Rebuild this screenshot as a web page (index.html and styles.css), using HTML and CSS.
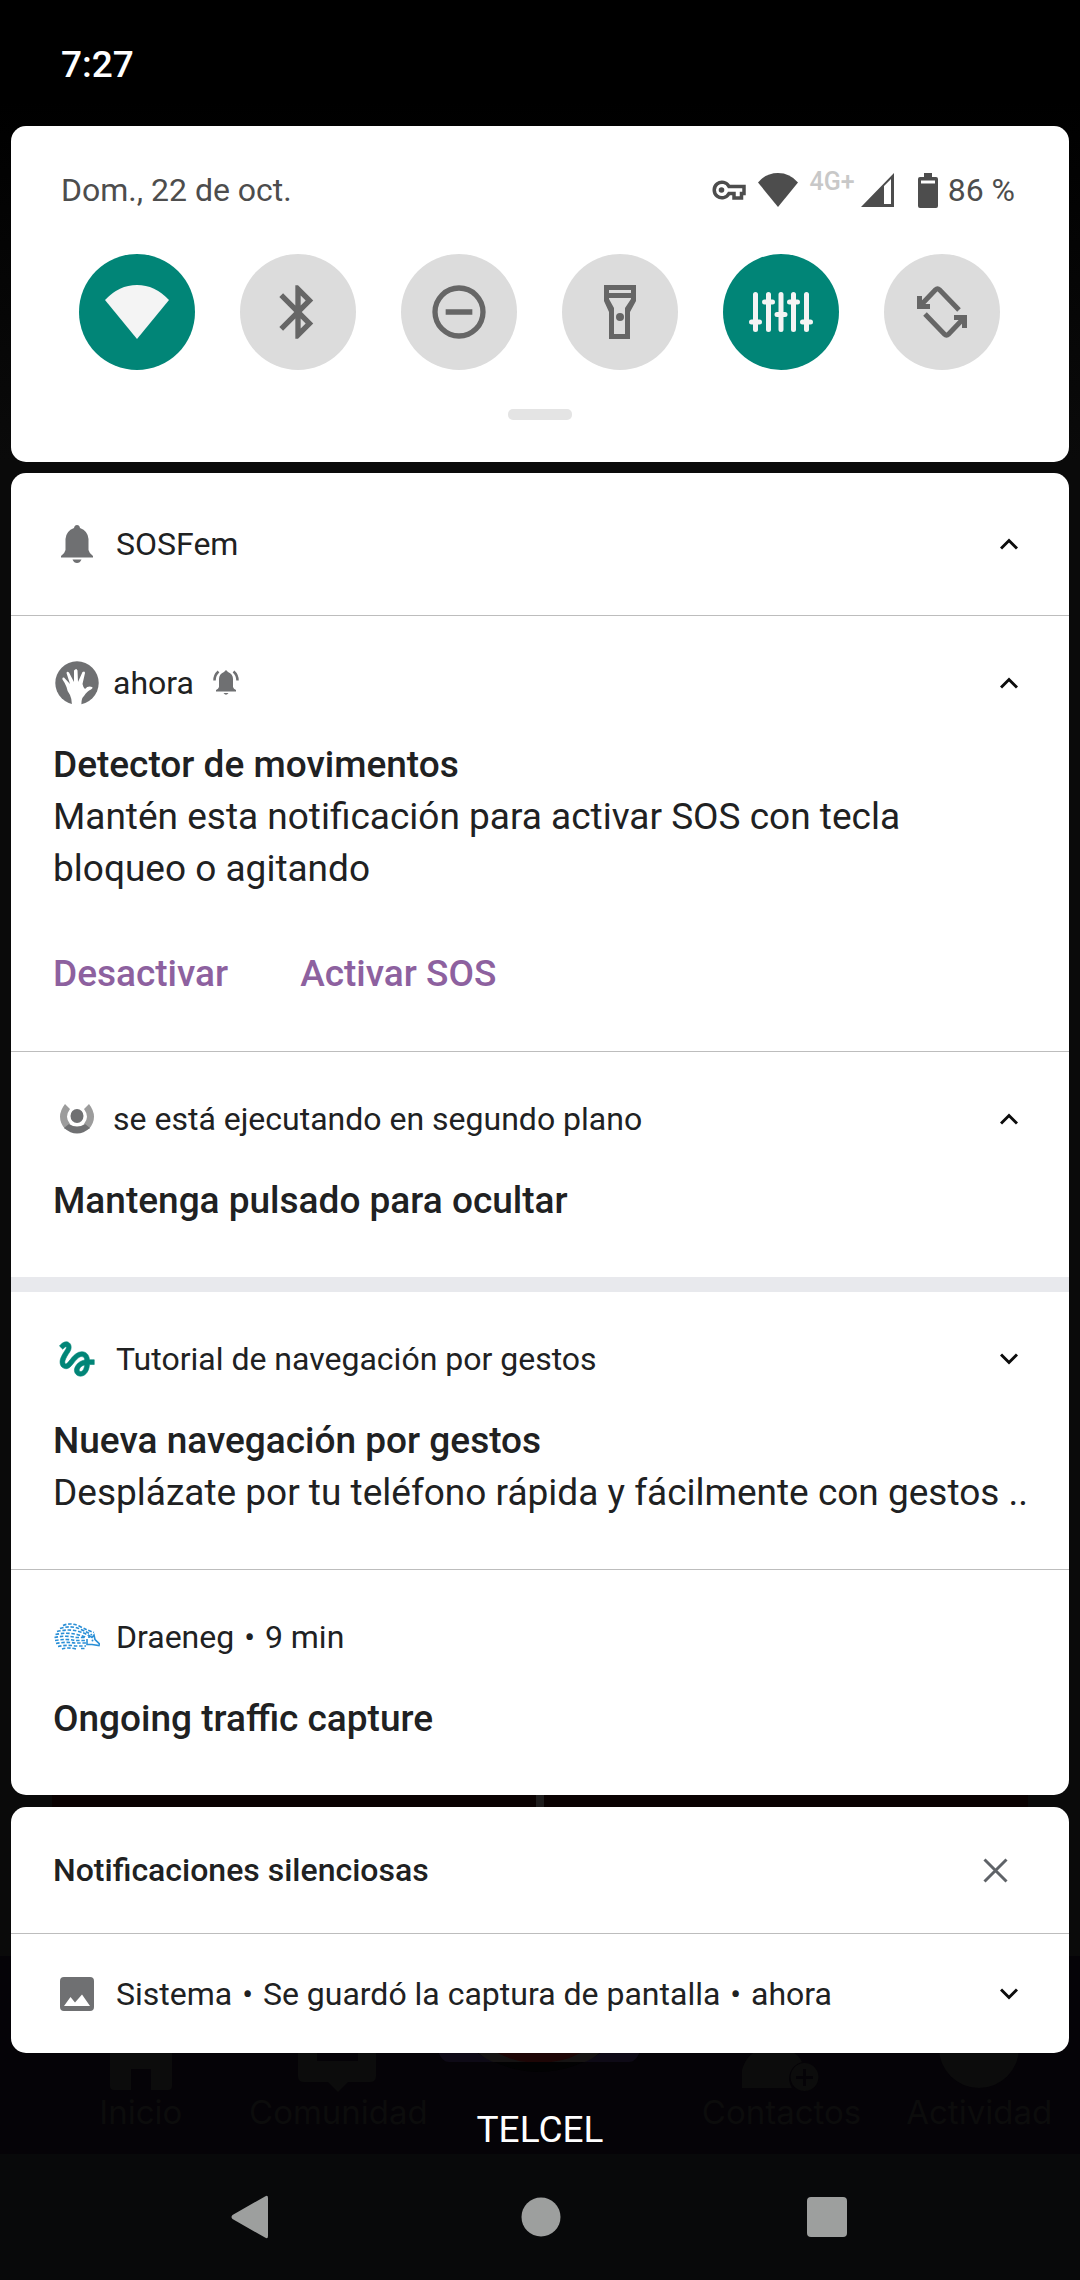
FILE: index.html
```html
<!DOCTYPE html>
<html lang="es">
<head>
<meta charset="utf-8">
<meta name="viewport" content="width=device-width, initial-scale=1">
<title>Notificaciones</title>
<link rel="stylesheet" href="styles.css">
</head>
<body>
<svg class="defs" aria-hidden="true">
  <symbol id="up" viewBox="0 0 18 12"><path d="M1 10.500 9 2.500 17 10.500" fill="none" stroke="currentColor" stroke-width="3"/></symbol>
  <symbol id="down" viewBox="0 0 18 12"><path d="M1 1.500 9 9.500 17 1.500" fill="none" stroke="currentColor" stroke-width="3"/></symbol>
</svg>
<div class="screen">
  <div class="app" aria-hidden="true">
    <div class="app-main"><div class="hero"><span class="hero-mark"></span></div></div>
    <div class="tabbar">
      <div class="tab">
        <svg width="80" height="80" viewBox="0 0 80 80"><path d="M40 10 9 36V74q0 4 4 4H30V57H50V78H67q4 0 4-4V36Z"/></svg>
        <span>Inicio</span>
      </div>
      <div class="tab">
        <svg width="80" height="80" viewBox="0 0 80 80"><path fill-rule="evenodd" d="M8 0H72q6 0 6 6V64q0 6-6 6H50L40 80 30 70H6q-6 0-6-6V0ZM19 38V49H60V38Z"/></svg>
        <span>Comunidad</span>
      </div>
      <div class="sos">
        <svg width="204" height="124" viewBox="0 0 204 124"><path fill="#0e0a16" d="M0 60H204V92Q200 106 192 106H12Q4 106 0 92Z"/><path fill="#020203" d="M30 90Q102 142 174 90Z"/><path fill="#161313" d="M36 92Q46 102 56 106H148Q158 102 168 92Z"/><path fill="#1e0606" d="M52 92Q70 104 90 106H114Q134 104 152 92Z"/></svg>
      </div>
      <div class="tab">
        <svg width="80" height="80" viewBox="0 0 80 80"><path d="M0 76V58Q6 36 30 36T60 50A17 17 0 0 0 50 76Z"/><path fill-rule="evenodd" d="M62 51a14 14 0 1 0 1 0ZM61 57h3v7h7v3h-7v7h-3v-7h-7v-3h7Z"/></svg>
        <span>Contactos</span>
      </div>
      <div class="tab">
        <svg width="80" height="80" viewBox="0 0 80 80"><circle cx="40" cy="36" r="40"/></svg>
        <span>Actividad</span>
      </div>
    </div>
  </div>

  <main class="shade">
    <header class="status"><time>7:27</time></header>

    <section class="card quick">
      <div class="quick-top">
        <span>Dom., 22 de oct.</span>
        <div class="signals">
          <svg width="34" height="20" viewBox="0 0 34 20"><path fill="none" stroke="currentColor" stroke-width="3.500" d="M17 6.500A7.800 7.800 0 1 0 17 13.500H22V18H29.500V13.500H32V6.500Z"/><circle cx="9.500" cy="10" r="2.800"/></svg>
          <svg class="s-wifi" width="40" height="34" viewBox="0 0 40 34"><path d="M0 9.500Q8 0 20 0T40 9.500L20 34Z"/></svg>
          <span class="net">4G+</span>
          <svg class="s-cell" width="33" height="34" viewBox="0 0 33 34"><path fill-rule="evenodd" d="M0 34 33 0V34ZM23 13V31H30V6Z"/></svg>
          <svg class="s-batt" width="20" height="35" viewBox="0 0 20 35"><path fill-rule="evenodd" d="M6 0H14V4H18Q20 4 20 6V33Q20 35 18 35H2Q0 35 0 33V6Q0 4 2 4H6ZM3 7.500V10.500H17V7.500Z"/></svg>
          <span>86 %</span>
        </div>
      </div>
      <div class="tiles">
        <button class="tile on" aria-label="Wi-Fi"><svg width="64" height="54" viewBox="0 0 64 54"><path d="M0 15Q14 0 32 0T64 15L32 54Z"/></svg></button>
        <button class="tile" aria-label="Bluetooth"><svg width="64" height="64" viewBox="0 0 24 24"><path d="M17.710 7.710 12 2h-1v7.590L6.410 5 5 6.410 10.590 12 5 17.590 6.410 19 11 14.410V22h1l5.710-5.710L13.410 12l4.300-4.290ZM13 5.830l1.880 1.880L13 9.590V5.830Zm1.880 10.460L13 18.170v-3.760l1.880 1.880Z"/></svg></button>
        <button class="tile" aria-label="No molestar"><svg width="64" height="64" viewBox="0 0 24 24"><path d="M7 11h10v2H7zM12 2a10 10 0 1 0 0 20 10 10 0 0 0 0-20Zm0 18a8 8 0 1 1 0-16 8 8 0 0 1 0 16Z"/></svg></button>
        <button class="tile" aria-label="Linterna"><svg width="32" height="54" viewBox="0 0 32 54"><path fill-rule="evenodd" d="M0 0H32V16L26 27V54H5V27L0 16ZM5 5V8H27V5ZM5 13V14L10 23V49H21V23L27 14V13Z"/><circle cx="16" cy="32" r="4"/></svg></button>
        <button class="tile on" aria-label="Ajustes de sonido"><svg width="64" height="40" viewBox="0 0 64 40"><path fill="none" stroke="currentColor" stroke-width="5" stroke-linecap="round" d="M6.500 2.500V37.500M19.500 2.500V37.500M32 2.500V37.500M44.500 2.500V37.500M57.500 2.500V37.500M2.500 30H10.500M15.500 10H23.500M28 22.500H36M40.500 10H48.500M53.500 30H61.500"/></svg></button>
        <button class="tile" aria-label="Girar automáticamente"><svg width="50" height="52" viewBox="0 0 50 52"><path fill="none" stroke="currentColor" stroke-width="5" d="M2.500 10V20.500H13M3.500 19.500 18.500 3.800Q20.500 1.800 22.500 3.800L42 24M47.500 42V31.500H37M46.500 32.500 31.500 48.200Q29.500 50.200 27.500 48.200L8 28"/></svg></button>
      </div>
      <div class="handle"></div>
    </section>

    <section class="card">
      <header class="row group-head">
        <span class="slot"><svg width="32" height="38" viewBox="0 0 32 38"><path d="M16 0Q18.500 0 19 3 27 6 27.500 14V25Q28 28 32 31V32.500H0V31Q4 28 4.500 25V14Q5 6 13 3 13.500 0 16 0ZM11.500 34.500H20.500Q19 38 16 38T11.500 34.500Z"/></svg></span>
        <span class="label">SOSFem</span>
        <button class="toggle" aria-label="Contraer"><svg width="18" height="12"><use href="#up"/></svg></button>
      </header>

      <article class="note">
        <header class="row">
          <span class="slot"><svg width="44" height="44" viewBox="0 0 44 44"><circle cx="22" cy="22" r="21.700"/><path fill="#fff" d="M17 45Q17 38 15 34 12 30 11.500 26 10 22 7.500 18.500 7 16 9 16.500L15 23 11.500 12Q12 10 14 11.500L19 21V9.500Q21.500 6.500 22.500 9.500L23 21 27.500 11Q30 9.500 30 12L27.500 23Q28 26 30 28 33 24.500 37 26 38.500 27 36 28.500 32 30 29 35 26 37 26.500 45Z"/></svg></span>
          <span class="label tight">ahora</span>
          <svg class="alert" width="26" height="26" viewBox="0 0 26 26"><path d="M13 0 15 2Q20 4 20 9V17Q20.500 19 23 20V21.500H3V20Q5.500 19 6 17V9Q6 4 11 2ZM10.500 23H15.500Q13 26.500 10.500 23Z"/><path fill="none" stroke="currentColor" stroke-width="2.500" d="M1.500 10.500Q1.500 5 5.500 1.500M24.500 10.500Q24.500 5 20.500 1.500"/></svg>
          <button class="toggle" aria-label="Contraer"><svg width="18" height="12"><use href="#up"/></svg></button>
        </header>
        <h2>Detector de movimentos</h2>
        <p>Mantén esta notificación para activar SOS con tecla bloqueo o agitando</p>
        <div class="actions"><button>Desactivar</button><button>Activar SOS</button></div>
      </article>

      <article class="note">
        <header class="row">
          <span class="slot"><svg width="34" height="30" viewBox="0 0 34 30"><path fill="#9c9c9c" d="M5 0 10 5Q4 13 10 20L5 25Q-5 13 5 0ZM29 0 24 5Q30 13 24 20L29 25Q39 13 29 0Z"/><path d="M9 20Q17 25 25 20L30 24Q17 35 4 24Z"/><ellipse cx="17" cy="12" rx="6.500" ry="7"/></svg></span>
          <span class="label tight">se está ejecutando en segundo plano</span>
          <button class="toggle" aria-label="Contraer"><svg width="18" height="12"><use href="#up"/></svg></button>
        </header>
        <h2>Mantenga pulsado para ocultar</h2>
      </article>

      <article class="note banded">
        <header class="row">
          <span class="slot teal"><svg width="46" height="46" viewBox="0 0 24 24"><path stroke="currentColor" stroke-width=".3" d="M4.590 6.890c.7-.71 1.400-1.350 1.710-1.220.5.2 0 1.030-.3 1.520-.25.42-2.860 3.890-2.860 6.310 0 1.280.48 2.340 1.340 2.980.75.56 1.740.73 2.640.46 1.070-.31 1.950-1.400 3.060-2.770 1.210-1.490 2.830-3.440 4.080-3.440 1.630 0 1.650 1.010 1.760 1.790-3.780.64-5.380 3.670-5.380 5.370 0 1.700 1.440 3.090 3.210 3.090 1.630 0 4.290-1.330 4.690-6.100H21v-2.500h-2.470c-.15-1.650-1.090-4.200-4.030-4.200-2.250 0-4.180 1.910-4.940 2.840-.58.73-2.060 2.480-2.290 2.720-.25.3-.68.84-1.110.84-.45 0-.72-.83-.36-1.920.35-1.090 1.400-2.860 1.850-3.520.78-1.140 1.300-1.920 1.300-3.280C8.950 3.690 7.310 3 6.440 3 5.120 3 3.970 4 3.720 4.250c-.36.36-.66.66-.88.93l1.750 1.710zm9.290 11.660c-.31 0-.74-.26-.74-.72 0-.6.73-2.200 2.870-2.760-.3 2.690-1.430 3.480-2.130 3.480z"/></svg></span>
          <span class="label">Tutorial de navegación por gestos</span>
          <button class="toggle" aria-label="Expandir"><svg width="18" height="12"><use href="#down"/></svg></button>
        </header>
        <h2>Nueva navegación por gestos</h2>
        <p class="single">Desplázate por tu teléfono rápida y fácilmente con gestos ..</p>
      </article>

      <article class="note">
        <header class="row">
          <span class="slot blue"><svg width="46" height="28" viewBox="0 0 46 28"><g fill="none" stroke="currentColor" stroke-width="1.600"><path stroke-dasharray="3.500 1.800" d="M9 2.500Q17-1 26 3.500T40 9.500M6 5.500Q17 2 26 6T38 12M3 8.500Q15 5.500 25 8.500T34 13M1.500 11.500Q13 9 23 11.500T32 15M.5 14.500Q12 12 22 14.500H31M1 17.500Q12 15.500 21 17.500H31M2 20.500Q12 18.500 21 20H32M4 23.500Q13 21.500 22 23H32M8 26Q14 24 22 26M27 25.500H32"/><path d="M33 16 33 21.500H38L45 22.500 45.500 21 41 16.500 40 12 38 14.500 35 12.500V15"/></g><circle cx="38.500" cy="17.500" r="1"/></svg></span>
          <span class="label">Draeneg <span class="dot">•</span> 9 min</span>
        </header>
        <h2>Ongoing traffic capture</h2>
      </article>
    </section>

    <section class="card">
      <header class="row silent-head">
        <h3>Notificaciones silenciosas</h3>
        <button class="close" aria-label="Borrar"><svg width="25" height="25" viewBox="0 0 25 25"><path fill="none" stroke="currentColor" stroke-width="3" d="M1.500 1.500 23.500 23.500M23.500 1.500 1.500 23.500"/></svg></button>
      </header>
      <div class="row silent-row">
        <span class="slot"><svg width="34" height="34" viewBox="0 0 34 34"><path fill-rule="evenodd" d="M4 0H30Q34 0 34 4V30Q34 34 30 34H4Q0 34 0 30V4Q0 0 4 0ZM4 29H30L22 17.500 15 25.500 10.500 20Z"/></svg></span>
        <span class="label">Sistema <span class="dot">•</span> Se guardó la captura de pantalla <span class="dot">•</span> ahora</span>
        <button class="toggle" aria-label="Expandir"><svg width="18" height="12"><use href="#down"/></svg></button>
      </div>
    </section>

    <footer class="carrier">TELCEL</footer>
  </main>

  <nav class="navbar" aria-label="Sistema">
    <button aria-label="Atrás"><svg width="44" height="44" viewBox="0 0 44 44"><path d="M34 1.500Q37-.5 37 3V41Q37 44.500 34 42.500L1.500 24Q-.5 22 1.500 20Z"/></svg></button>
    <button aria-label="Inicio"><svg width="40" height="40" viewBox="0 0 40 40"><circle cx="20" cy="20" r="19.500"/></svg></button>
    <button aria-label="Recientes"><svg width="40" height="40" viewBox="0 0 40 40"><rect width="40" height="40" rx="4"/></svg></button>
  </nav>
</div>
</body>
</html>
```

FILE: styles.css
```css
* { box-sizing: border-box; }
body {
  margin: 0;
  background: #050307;
  font-family: Roboto, "Noto Sans", sans-serif;
  font-size: 32px;
  line-height: 52px;
  color: #202122;
}
h2, h3, p { margin: 0; font-weight: 400; }
button {
  margin: 0;
  padding: 0;
  border: 0;
  background: none;
  font: inherit;
  color: inherit;
}
svg { display: block; fill: currentColor; flex: none; }
.defs { position: absolute; width: 0; height: 0; }

.screen {
  display: grid;
  grid-template-columns: minmax(0, 1fr);
  grid-template-rows: 1fr auto;
  min-height: 100vh;
}

/* App showing dimly behind the shade */
.app {
  grid-area: 1 / 1;
  display: flex;
  flex-direction: column;
  color: #0c0c0c;
  overflow: hidden;
}
.app-main {
  flex: 1;
  display: flex;
  align-items: flex-end;
  background: linear-gradient(#000 100px, #0a0a0a 460px);
}
.hero {
  flex: 1;
  height: 200px;
  margin: 0 52px;
  border-radius: 40px;
  background: #0a0202;
  display: flex;
  justify-content: center;
}
.hero-mark { width: 8px; background: #1e1c1c; }
.tabbar {
  display: grid;
  grid-template-columns: 198fr 198fr 246fr 198fr 198fr;
  align-items: end;
  height: 198px;
  padding: 0 2px 22px 42px;
}
.tab {
  display: flex;
  flex-direction: column;
  align-items: center;
  font-family: Inter, sans-serif;
  font-size: 33px;
  line-height: 40px;
}
.sos { align-self: start; }

/* Notification shade */
.shade {
  grid-area: 1 / 1;
  display: flex;
  flex-direction: column;
  padding: 0 11px;
  z-index: 1;
}
.status {
  height: 126px;
  padding: 39px 50px 0;
  color: #fff;
  font-size: 37px;
  font-weight: 500;
}
.card {
  background: #fff;
  border-radius: 15px;
  margin-bottom: 12px;
}

.quick { padding: 38px 50px 42px; margin-bottom: 11px; color: #4d4d4d; }
.quick-top {
  display: flex;
  justify-content: space-between;
  align-items: center;
  padding-right: 4px;
}
.signals { display: flex; align-items: center; }
.s-wifi { margin-left: 12px; }
.net {
  margin-left: 12px;
  align-self: flex-start;
  font-size: 25px;
  font-weight: 500;
  line-height: 36px;
  color: #c8c8c8;
}
.s-cell { margin-left: 6px; }
.s-batt { margin: 0 10px 0 24px; }
.tiles {
  display: flex;
  justify-content: space-between;
  padding: 38px 19px 39px 18px;
}
.tile {
  display: flex;
  align-items: center;
  justify-content: center;
  width: 116px;
  height: 116px;
  border-radius: 50%;
  background: #dcdcdc;
  color: #666;
}
.tile.on { background: #018577; color: #f4f4f4; }
.handle {
  width: 64px;
  height: 11px;
  margin: 0 auto;
  border-radius: 5px;
  background: #e4e4e4;
}

.row { display: flex; align-items: center; height: 64px; }
.slot {
  display: flex;
  justify-content: center;
  width: 48px;
  margin-right: 15px;
  color: #6f7072;
}
.slot.teal { color: #018577; }
.slot.blue { color: #2a8fd6; }
.label { white-space: nowrap; }
.label.tight { margin-left: -3px; }
.dot { padding: 0 2px; }
.alert { margin-left: 19px; color: #6f7072; }
.toggle, .close {
  display: flex;
  align-items: center;
  justify-content: center;
  width: 48px;
  height: 48px;
  margin-left: auto;
  color: #0c0c0c;
}
.toggle { margin-right: -6px; }
.close { margin-right: 8px; color: #5f6368; }

.group-head { height: 142px; padding: 0 42px; }
.note {
  padding: 35px 42px 50px;
  border-top: 1px solid #bdbdbd;
}
.note.banded { border-top: 15px solid #e8e9ed; }
.note h2, .note p, .actions { font-size: 37px; }
.note h2 { margin-top: 24px; font-weight: 500; }
.note p.single { white-space: nowrap; }
.actions {
  display: flex;
  gap: 72px;
  margin-top: 53px;
  padding-bottom: 1px;
  color: #8d619f;
}
.actions button { font-weight: 500; line-height: 52px; }

.silent-head { height: 126px; padding: 0 42px; }
.silent-head h3 { font-size: 32px; font-weight: 500; }
.silent-row {
  height: 120px;
  padding: 0 42px;
  border-top: 1px solid #bdbdbd;
}
.carrier {
  margin-top: auto;
  text-align: center;
  font-size: 37px;
  line-height: 48px;
  color: #fff;
}

.navbar {
  display: flex;
  justify-content: center;
  align-items: center;
  gap: 246px;
  height: 126px;
  padding-right: 2px;
  background: #08090a;
  color: #9d9f9e;
}
```
